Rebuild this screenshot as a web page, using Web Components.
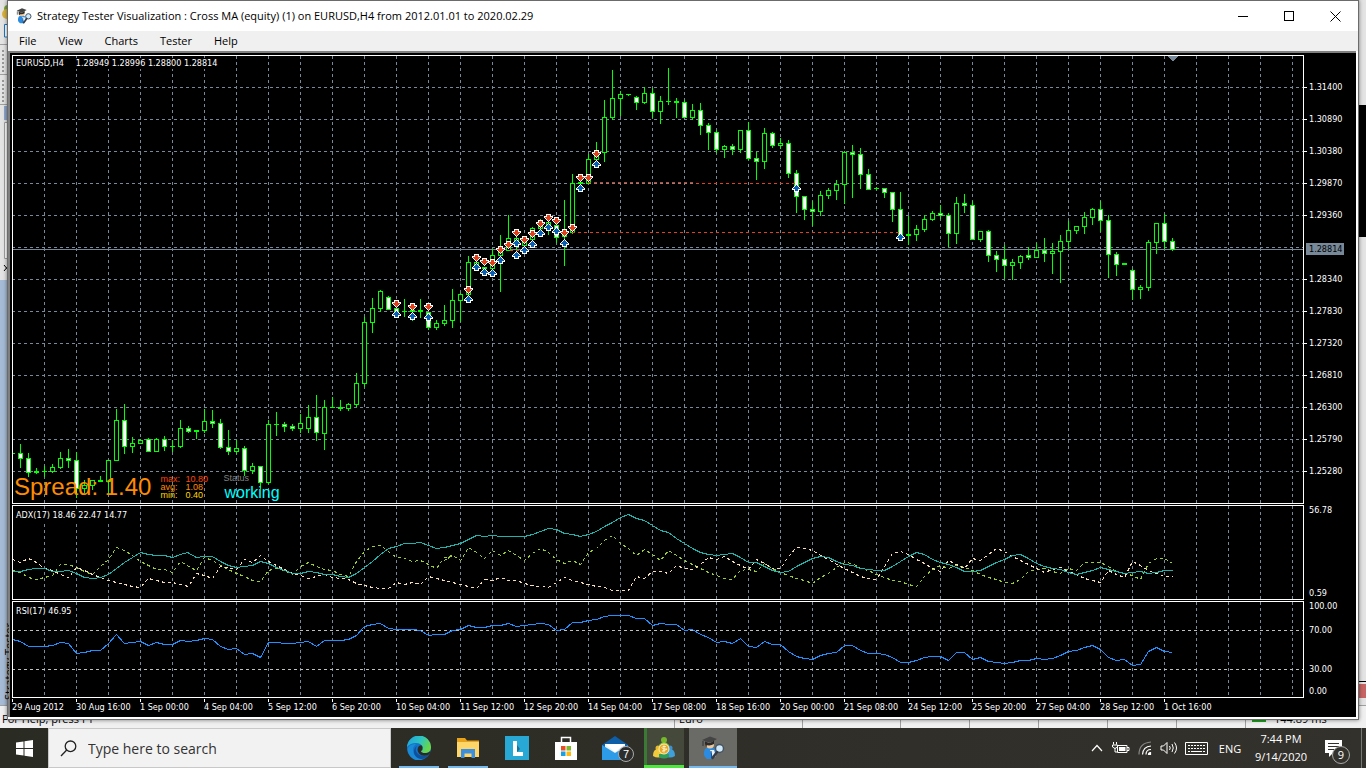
<!DOCTYPE html>
<html lang="en">
<head>
<meta charset="utf-8">
<title>Strategy Tester Visualization</title>
<style>
html,body{margin:0;height:100%;overflow:hidden;background:#000}
body{font-family:"Open Sans","Noto Sans",sans-serif;font-size:11px;color:#000}
</style>
</head>
<body>
<app-desktop></app-desktop>
<script>
function define(name, html, setup) {
  const tpl = document.createElement('template');
  tpl.innerHTML = html;
  customElements.define(name, class extends HTMLElement {
    connectedCallback() {
      if (this.shadowRoot) return;
      this.attachShadow({ mode: 'open' }).appendChild(tpl.content.cloneNode(true));
      if (setup) setup.call(this, this.shadowRoot);
    }
  });
}

/* ---------- market data: y values in chart space, one bar every 8px from x=12 ---------- */
/* high, body top, body bottom, low, kind (f = bearish filled, h = bullish hollow, d = flat) */
const BARS = `453 453 454 454 d|444 453 459 468 f|453 458 473 477 f|468 471 473 474 d|466 471 472 477 d|464 467 472 473 h|452 458 468 469 h|449 458 461 468 f|452 460 489 498 f|480 485 489 493 h|480 480 486 490 h|476 480 482 482 d|460 460 482 495 h|409 420 461 461 h|404 420 447 454 f|437 443 447 453 h|439 440 444 444 h|438 439 452 452 f|438 439 452 452 h|436 439 447 451 f|440 446 447 452 d|420 428 447 448 h|426 428 432 433 f|430 430 432 439 d|409 421 431 433 h|410 421 424 428 f|419 423 448 449 f|430 447 452 455 f|440 448 452 454 h|446 448 471 476 f|463 466 471 474 h|466 466 483 489 f|420 424 483 484 h|412 424 425 436 d|422 424 427 432 f|424 426 429 431 f|414 423 429 433 h|405 417 429 433 h|395 417 433 441 f|400 407 434 450 h|397 407 408 408 d|400 407 409 411 d|403 404 409 411 h|373 383 405 407 h|317 322 384 387 h|298 308 323 333 h|290 291 309 312 h|296 297 310 310 f|308 308 313 313 f|299 311 312 317 d|309 310 312 321 d|299 310 312 318 d|312 312 328 330 f|320 323 328 330 h|305 320 324 326 h|289 300 321 328 h|293 294 301 322 h|256 262 295 295 h|262 262 265 265 h|267 267 269 269 d|249 255 269 269 h|235 251 256 292 h|215 238 251 251 h|236 238 247 255 h|236 242 246 246 h|227 228 240 240 h|219 225 229 229 h|222 222 230 235 h|225 225 238 243 f|200 233 237 266 h|174 183 233 234 h|182 182 184 184 d|154 159 184 184 h|142 155 160 160 h|100 117 153 162 h|70 98 118 120 h|91 94 99 116 h|94 94 95 96 d|96 97 103 110 f|87 93 103 104 h|88 93 112 118 f|96 101 112 124 h|68 101 102 105 d|98 101 103 118 d|100 102 118 118 f|104 110 118 120 h|103 110 126 135 f|123 125 133 150 f|130 132 150 153 f|145 146 150 158 h|144 146 150 155 f|130 130 150 153 h|122 130 159 160 f|152 158 162 180 f|128 133 162 169 h|132 133 146 148 f|138 143 146 149 h|140 143 174 178 f|170 173 197 213 f|196 196 210 220 f|201 209 212 226 f|191 195 212 216 h|188 190 196 199 h|180 184 191 200 h|151 152 185 204 h|145 152 155 198 f|148 154 175 189 f|169 174 190 190 f|187 188 189 190 d|188 188 193 198 f|192 192 210 222 f|192 209 237 237 f|216 234 236 245 d|225 229 235 241 h|215 219 230 232 h|211 213 220 221 h|205 213 216 219 f|213 215 234 247 f|197 203 234 244 h|194 203 206 213 f|201 205 240 240 f|231 231 240 242 h|230 231 256 262 f|251 255 260 272 f|245 259 266 279 f|259 262 266 280 h|255 256 263 269 h|247 255 258 260 f|243 250 258 258 h|238 250 254 262 f|243 251 254 274 h|235 241 252 283 h|221 230 242 249 h|226 226 231 234 h|212 217 227 234 h|208 209 218 225 h|201 209 221 232 f|215 220 255 278 f|252 254 265 276 f|263 263 265 265 d|269 270 290 300 f|285 287 290 299 h|240 242 288 291 h|223 223 243 254 h|214 223 242 249 f|238 241 250 251 f`;
const SELLS = '396,304 412,307 428,307 468,290 476,258 484,262 492,263 500,250 508,245 516,233 524,240 532,234 540,224 548,218 556,221 564,233 572,228 580,178 588,178 596,154';
const BUYS = '396,314 412,316 428,317 468,299 476,267 484,272 492,273 500,260 516,243 516,255 524,250 532,244 540,233 548,227 556,231 564,243 580,188 596,164 796,188 900,237';

/* indicator series: x,y pairs in thirds of a pixel, in three sections that start at x=0, 440 and 880 */
const SERIES = {
 adx: [[0,'38,214 62,214 85,208 110,205 133,205 157,214 181,214 205,211 229,220 253,231 280,236 301,233 325,222 349,205 373,187 397,171 421,157 445,162 469,166 493,166 517,172 541,162 563,157 589,172 613,169 637,170 661,184 685,195 709,203 733,200 757,196 781,184 805,190 829,203 853,212 877,221 901,219 925,214 949,217 973,222 997,222 1021,229 1045,233 1069,221 1093,203 1117,184 1141,163 1165,144 1189,140 1213,131 1237,131 1261,127 1285,136 1309,146'],
  [440,'13,143 37,136 61,129 85,118 109,106 133,109 157,105 181,109 205,109 253,108 277,102 301,94 325,85 349,88 373,99 397,103 421,109 445,103 469,94 493,79 517,66 541,53 565,43 589,55 613,62 637,76 661,91 685,98 709,114 733,130 757,145 781,157 805,164 829,167 853,162 877,160 901,172 925,187 949,187 973,200 997,211 1021,217 1045,213 1069,198 1093,186 1117,174 1141,170 1165,172 1189,183 1213,193 1237,197 1261,204 1285,209 1309,212'],
  [880,'13,212 37,200 61,184 85,168 109,157 133,162 157,178 181,188 205,194 229,203 253,214 277,214 301,211 325,200 349,188 373,177 397,166 421,164 445,175 469,190 493,199 517,205 541,208 565,216 589,222 613,216 637,211 661,202 685,207 709,213 733,220 757,217 781,214 805,220 829,217 853,212 876,212']],
 plus: [[0,'38,210 61,218 85,231 109,237 133,232 157,227 181,192 205,192 229,203 253,213 277,224 301,200 325,178 349,142 373,152 397,167 421,183 445,196 469,207 493,208 517,217 541,185 565,200 589,210 613,172 637,182 661,197 685,207 709,219 733,230 757,240 781,243 805,212 829,204 853,212 877,222 901,200 925,187 949,198 973,208 997,211 1021,222 1045,228 1069,185 1093,155 1117,140 1141,136 1165,155 1189,172 1213,175 1237,184 1261,180 1285,194 1309,204 1333,173 1357,166'],
  [440,'13,180 37,165 61,180 85,143 109,158 133,175 157,150 181,167 205,150 229,165 253,180 277,161 301,146 325,158 349,177 373,189 397,181 421,192 445,158 469,144 493,122 517,106 541,130 565,146 589,166 613,148 637,162 661,182 685,152 709,165 733,180 757,194 781,205 805,216 829,227 853,236 877,239 901,211 925,209 949,214 973,191 997,205 1021,217 1045,226 1069,236 1093,240 1117,249 1141,233 1165,221 1189,202 1213,187 1237,191 1261,204 1285,212 1309,224'],
  [880,'13,231 37,240 61,245 85,253 109,260 133,230 157,207 181,195 205,206 229,197 253,203 277,212 301,222 325,232 349,239 373,248 397,251 421,238 445,213 469,207 493,204 517,214 541,220 565,204 589,212 613,187 637,187 661,187 685,200 709,214 733,220 757,226 781,238 805,190 829,175 853,176 876,190']],
 minus: [[0,'38,177 61,187 85,176 109,186 133,205 157,210 181,222 205,233 229,203 253,212 277,224 301,232 325,240 349,247 373,253 397,260 421,262 445,234 469,240 493,247 517,247 541,254 565,260 589,220 613,227 637,236 661,200 685,202 709,207 733,178 757,187 781,167 805,183 829,195 853,207 877,221 901,226 925,235 949,229 973,222 997,232 1021,234 1045,239 1069,249 1093,256 1117,261 1141,264 1165,265 1189,248 1213,253 1237,248 1261,253 1285,229 1309,236'],
  [440,'13,240 37,248 61,253 85,259 109,264 133,238 157,242 181,233 205,240 229,241 253,250 277,256 301,260 325,262 349,246 373,233 397,240 421,246 445,254 469,259 493,263 517,270 541,270 565,272 589,230 613,234 637,214 661,214 685,220 709,196 733,204 757,208 781,193 805,173 829,178 853,170 877,183 901,197 925,207 949,177 973,191 997,204 1021,206 1045,170 1069,143 1093,146 1117,150 1141,167 1165,178 1189,192 1213,205 1237,218 1261,228 1285,234 1309,237'],
  [880,'13,200 37,160 61,155 85,163 109,177 133,189 157,206 181,215 205,181 229,192 253,206 277,176 301,180 325,162 349,146 373,155 397,168 421,181 445,192 469,204 493,217 517,207 541,202 565,213 589,224 613,234 637,241 661,246 685,210 709,222 733,232 757,184 781,197 805,210 829,219 853,230 876,230']],
 rsi: [[0,'38,418 61,425 85,439 109,439 133,439 157,436 181,427 205,430 229,461 253,457 277,451 301,451 325,430 349,403 373,430 397,427 421,424 445,436 469,427 493,433 517,433 541,421 565,425 589,421 613,415 637,419 661,440 685,449 709,445 733,463 757,460 781,472 805,427 829,427 853,430 877,430 901,428 925,424 949,438 973,422 997,421 1021,421 1045,417 1069,406 1093,380 1117,373 1141,371 1165,385 1189,388 1237,388 1261,391 1285,406 1309,403'],
  [440,'13,403 37,391 61,388 85,376 109,382 133,382 157,377 181,376 205,370 229,379 253,376 277,373 301,370 325,373 349,391 373,387 397,367 421,367 445,361 469,358 493,349 517,346 565,346 589,355 613,356 637,376 661,370 685,373 709,373 733,391 757,388 781,403 805,413 829,427 853,424 877,430 901,415 925,438 949,443 973,424 997,433 1021,433 1045,454 1069,468 1093,475 1117,479 1141,467 1165,461 1189,457 1213,436 1237,437 1261,451 1285,460 1309,460'],
  [880,'13,463 37,472 61,487 85,487 109,481 133,472 157,469 181,469 205,481 229,457 253,458 277,478 301,472 325,484 349,487 373,490 397,487 421,481 445,481 469,475 493,478 517,475 541,466 565,454 589,451 613,442 637,436 661,449 685,472 709,482 733,478 757,496 781,493 805,455 829,442 853,454 876,457']]
};
const points = key => SERIES[key].map(([x0, s]) => s.split(' ').map(p => {
  const [x, y] = p.split(',').map(Number);
  return Math.round(x0 + x / 3 - .5) + ',' + Math.floor(500 + y / 3);
}).join(' ')).join(' ');
const line = (key, color, dash) => `<polyline points="${points(key)}" transform="translate(.5 .5)" fill="none" stroke="${color}" ${dash ? `stroke-dasharray="${dash}"` : ''} shape-rendering="crispEdges"/>`;

const gridLines = (top, height, rows) => {
  let s = '';
  for (let x = 44; x < 2600; x += 32) s += `<path d="M${x}.5 ${top}V${top + height}"/>`;
  for (const y of rows) s += `<path d="M12 ${y}.5H2600"/>`;
  return `<g fill="none" stroke="#778899" stroke-dasharray="3 3" shape-rendering="crispEdges">${s}</g>`;
};

const candles = () => BARS.split('|').map((row, i) => {
  const [h, t, b, l, k] = row.split(' ');
  const x = 12 + 8 * i;
  let s = '';
  if (k !== 'd') {
    s += `<path fill="#0f0" d="M${x} ${h}h1V${t}h-1zM${x} ${b}h1V${l}h-1z"/>`;
    s += `<rect x="${x - 2}" y="${t}" width="5" height="${b - t}" fill="#0f0"/>`;
    s += `<rect x="${x - 1}" y="${+t + 1}" width="3" height="${Math.max(1, b - t - 2)}" fill="${k === 'f' ? '#fff' : '#000'}"/>`;
  } else {
    s += `<path fill="#0f0" d="M${x} ${h}h1V${l}h-1zM${x - 2} ${t}h5V${b}h-5z"/>`;
  }
  return s;
}).join('');

const arrows = (list, id) => list.split(' ').map(p => {
  const [x, y] = p.split(',');
  return `<use href="#${id}" x="${x}" y="${y}"/>`;
}).join('');

/* ---------- shared icons ---------- */
const scholar = size => `<svg width="${size}" height="${size}" viewBox="0 0 24 24">
<path d="M4 13q5-4 10 0l1 5-3 5H6q-5-4-2-10z" fill="#2b8be0"/><path d="M9 14l3 8 3-2-2-6z" fill="#e8f2fb"/><path d="M10 15l1 7" stroke="#1b4a80"/>
<circle cx="9" cy="8.500" r="4" fill="#e9c9a0"/><path d="M5 7l-1 3 2 1V7z" fill="#6b4a22"/>
<path d="M1 4l8-3.500L16 3l-7 4z" fill="#444"/><path d="M4 5.500v3q5 2 9-.5V4.500L9 7z" fill="#2b2b2b"/><path d="M2 5v5" stroke="#333"/>
<circle cx="18.500" cy="12.500" r="4" fill="#cfe9fb" stroke="#44525f" stroke-width="1.500"/><path d="M16 16l-4.500 6" stroke="#333c46" stroke-width="2.500" stroke-linecap="round"/></svg>`;

define('app-titlebar', `<style>
:host{display:flex;align-items:center;height:30px;background:#fff;padding-left:8px}
h1{flex:1;margin:0;font-size:11px;font-weight:400;line-height:16px;padding-left:5px;white-space:nowrap}
svg{display:block}
button{border:0;background:none;width:46px;height:30px;padding:0;display:grid;place-items:center}
.controls{display:flex}
</style>
${scholar(16)}<h1><slot></slot></h1>
<div class="controls">
<button aria-label="Minimize"><svg width="11" height="11" shape-rendering="crispEdges"><path d="M0 5.500H10" stroke="#000"/></svg></button>
<button aria-label="Maximize"><svg width="11" height="11" shape-rendering="crispEdges"><path d="M.5.5H9.500V9.500H.5z" fill="none" stroke="#000"/></svg></button>
<button aria-label="Close"><svg width="11" height="11"><path d="M.5.5L10.500 10.500M10.500.5L.5 10.500" stroke="#000"/></svg></button>
</div>`);

define('app-menubar', `<style>
:host{display:flex;align-items:center;gap:22px;height:20px;background:#f0f0f0;padding-left:11px}
button{border:0;background:none;padding:0;font:inherit;line-height:16px;color:#000}
</style><button>File</button><button>View</button><button>Charts</button><button>Tester</button><button>Help</button>`);

define('price-panel', `<style>
:host{display:block;position:relative;border:1px solid #fff;overflow:hidden;min-height:0}
svg{position:absolute;inset:0;width:100%;height:100%}
.caption{position:absolute;left:2px;top:2px;background:#000;line-height:11px;padding:0 1px;display:flex;gap:12px}
.stats{position:absolute;left:1px;bottom:1px;display:flex;align-items:flex-end;font-family:"Liberation Sans",Arial,sans-serif}
.spread{font-size:24px;line-height:30px;color:#ff8c00}
dl{margin:0 0 3px 9px;display:grid;grid-template-columns:25px 23px;font-size:9px;line-height:8px}
dt,dd{margin:0}
.max{color:#ff4500}.avg{color:#ff8c00}.min{color:#ffd700}
.status{margin-left:15px;font-size:9px;line-height:12px;color:#808080}
.status strong{display:block;font-weight:400;font-size:16px;line-height:18px;color:#0ff;padding-left:1px}
</style><svg aria-hidden="true"></svg>
<div class="caption"><span>EURUSD,H4</span><span>1.28949 1.28996 1.28800 1.28814</span></div>
<div class="stats"><div class="spread">Spread: 1.40</div>
<dl><dt class="max">max:</dt><dd class="max">10.80</dd><dt class="avg">avg:</dt><dd class="avg">1.08</dd><dt class="min">min:</dt><dd class="min">0.40</dd></dl>
<div class="status">Status<strong>working</strong></div></div>`, function (root) {
  const rows = [];
  for (let y = 87; y < 1600; y += 32) rows.push(y);
  root.querySelector('svg').innerHTML = `<defs>
<g id="sell"><path fill="#fff" d="M-2-4h5v2h2v2h-1v1h-1v1h-1v1h-1v1h-1v-1h-1v-1h-1v-1h-1v-1h-1v-2h2z"/><path fill="#e0401c" d="M-1-3h3v2h2v1h-1v1h-1v1h-1v1h-1v-1h-1v-1h-1v-1h-1v-1h2z"/></g>
<g id="buy"><path fill="#fff" d="M-2 4h5v-2h2v-2h-1v-1h-1v-1h-1v-1h-1v-1h-1v1h-1v1h-1v1h-1v1h-1v2h2z"/><path fill="#0c60b4" d="M-1 3h3v-2h2v-1h-1v-1h-1v-1h-1v-1h-1v1h-1v1h-1v1h-1v1h2z"/></g></defs>
<g transform="translate(-13 -56)" shape-rendering="crispEdges">${gridLines(56, 2000, rows)}
<path d="M12 249.500H2600" stroke="#778899"/>${candles()}
<path d="M588 182.500H693M696 183.500H796M572 232.500H900M510 250.500H522" stroke="#e0401c" fill="none" stroke-dasharray="3 3"/>
${arrows(SELLS, 'sell')}${arrows(BUYS, 'buy')}
<path d="M1167 56h11l-5 5h-1z" fill="#778899"/></g>`;
});

define('adx-panel', `<style>
:host{display:block;position:relative;border:1px solid #fff;overflow:hidden}
svg{position:absolute;inset:0;width:100%;height:100%}
.caption{position:absolute;left:2px;top:4px;background:#000;line-height:11px;padding:0 1px}
</style><svg aria-hidden="true"></svg><div class="caption">ADX(17) 18.46 22.47 14.77</div>`, function (root) {
  root.querySelector('svg').innerHTML = `<g transform="translate(-13 -506)">${gridLines(506, 200, [])}
${line('plus', '#9acd32', '3 3')}${line('minus', '#f5deb3', '3 3')}${line('adx', '#20b2aa')}</g>`;
});

define('rsi-panel', `<style>
:host{display:block;position:relative;border:1px solid #fff;overflow:hidden}
svg{position:absolute;inset:0;width:100%;height:100%}
.caption{position:absolute;left:2px;top:4px;background:#000;line-height:11px;padding:0 1px}
</style><svg aria-hidden="true"></svg><div class="caption">RSI(17) 46.95</div>`, function (root) {
  root.querySelector('svg').innerHTML = `<g transform="translate(-13 -602)">${gridLines(602, 200, [])}
<path d="M12 630.500H2600M12 669.500H2600" stroke="#c0c0c0" stroke-dasharray="3 3" shape-rendering="crispEdges"/>
${line('rsi', '#1e90ff')}</g>`;
});

define('price-scale', `<style>
:host{display:block;position:relative;overflow:hidden;padding-top:16px}
ol{list-style:none;margin:0;padding:0}
li{height:32px;line-height:32px;display:flex;align-items:center}
li::before{content:"";width:3px;height:1px;background:#fff;margin-right:2px}
li:empty{visibility:hidden}
output{position:absolute;left:2px;top:188px;background:#778899;color:#000;line-height:12px;padding:0 2px 0 3px}
</style><ol></ol><output>1.28814</output>`, function (root) {
  root.querySelector('ol').innerHTML = ['1.31400','1.30890','1.30380','1.29870','1.29360','','1.28340','1.27830','1.27320','1.26810','1.26300','1.25790','1.25280'].map(t => `<li>${t}</li>`).join('');
});

define('level-scale', `<style>
:host{display:flex;flex-direction:column;line-height:11px}
::slotted(span){display:block;padding-left:5px}
</style><slot></slot>`);

define('time-scale', `<style>
:host{display:flex;overflow:hidden}
span{flex:0 0 64px;white-space:nowrap;line-height:11px}
span::before{content:"";display:block;width:1px;height:3px;background:#fff}
</style>`, function (root) {
  for (const t of ['29 Aug 2012','30 Aug 16:00','1 Sep 00:00','4 Sep 04:00','5 Sep 12:00','6 Sep 20:00','10 Sep 04:00','11 Sep 12:00','12 Sep 20:00','14 Sep 04:00','17 Sep 08:00','18 Sep 16:00','20 Sep 00:00','21 Sep 08:00','24 Sep 12:00','25 Sep 20:00','27 Sep 04:00','28 Sep 12:00','1 Oct 16:00']) {
    const s = document.createElement('span');
    s.textContent = t;
    root.appendChild(s);
  }
});

define('chart-view', `<style>
:host{display:grid;grid-template-columns:minmax(0,1fr) 52px;grid-template-rows:minmax(0,1fr) 95px 97px 18px;row-gap:1px;
background:#000;color:#fff;font:9px "DejaVu Sans Condensed","DejaVu Sans",sans-serif;padding:2px 0 0 2px;border:solid #808080;border-width:2px 0 0 2px;min-height:0}
.r70{margin-top:13px}.r30{margin-top:28px}.r0{margin-top:11px}
.a2{margin-top:72px}
time-scale{grid-column:1 / 3}
</style>
<price-panel></price-panel><price-scale></price-scale>
<adx-panel></adx-panel><level-scale><span>56.78</span><span class="a2">0.59</span></level-scale>
<rsi-panel></rsi-panel><level-scale><span>100.00</span><span class="r70">70.00</span><span class="r30">30.00</span><span class="r0">0.00</span></level-scale>
<time-scale></time-scale>`);

define('tester-window', `<style>
:host{display:grid;grid-template-rows:30px 20px minmax(0,1fr);background:#fff;border:solid #6b6b6b;border-width:1px;padding:0 2px 2px 0;box-shadow:0 0 4px rgba(0,0,0,.5)}
app-titlebar,app-menubar{margin-right:-2px}
</style>
<app-titlebar>Strategy Tester Visualization : Cross MA (equity) (1) on EURUSD,H4 from 2012.01.01 to 2020.02.29</app-titlebar>
<app-menubar></app-menubar><chart-view></chart-view>`);

define('terminal-window', `<style>
:host{display:grid;grid-template-rows:minmax(0,1fr) 23px;background:#e4e4e4}
.body{display:flex;justify-content:space-between;min-height:0}
.left,.right{width:9px;display:flex;flex-direction:column;overflow:hidden}
.left svg{display:block;flex:none}
.dock{flex:1;background:#a6bcd6;display:flex;flex-direction:column;justify-content:flex-end;padding:0 0 5px 2px}
.dock span{writing-mode:vertical-rl;transform:rotate(180deg);line-height:14px;width:14px;white-space:nowrap}
.right .log{height:132px;margin-top:105px;background:#000}
.right .mark{margin-top:auto;height:16px;width:11px;border-top:1px solid #000;background:linear-gradient(#e4e4e4 2px,#c86464 2px)}
.right .gap{height:7px}
.status{display:flex;border-top:1px solid #a0a0a0;background:#f0f0f0;line-height:14px;white-space:nowrap;overflow:hidden}
.status span{box-sizing:border-box;border-right:1px solid #a0a0a0;padding:6px 0 0 4px;width:69px}
.status .help{flex:1;padding-left:2px}.status .euro{width:128px}.status .mid{width:98px}.status .ping{width:120px;border:0;padding-left:6px;display:flex;gap:8px}
b{display:block;width:14px;height:10px;background:#20a020}
</style>
<div class="body"><div class="left"><svg width="9" height="280" viewBox="0 0 9 280"><circle cx="8" cy="9" r="4" fill="#76a83a"/><circle cx="7" cy="14" r="5" fill="#d8b23c"/><path d="M4.500 24.500H9V37H4.500z" fill="#fff" stroke="#1c78c8"/><path d="M0 44.500h9M0 74.500h9M0 104.500h9" stroke="#a0a0a0"/><path d="M3 50v22M3 80v22" stroke="#999" stroke-dasharray="2 2" stroke-width="2"/><path d="M4 106h5v14H4z" fill="#8ea6cc"/><path d="M4.500 122.500H9v136H4.500z" fill="#fff" stroke="#a0a0a0"/><path d="M7.500 234v18" stroke="#000"/><path d="M4 265l5 6M9 265l-5 6" stroke="#000"/></svg><div class="dock"><span>Strategy Tester</span></div></div>
<div class="right"><div class="log"></div><div class="mark"></div><div class="gap"></div></div></div>
<div class="status"><span class="help">For Help, press F1</span><span class="euro">Euro</span><span class="mid"></span><span></span><span></span><span></span><span></span><span></span><span class="ping"><b></b>144.89 ms</span></div>`);

define('task-tray', `<style>
:host{display:flex;align-items:center;height:40px;color:#fff;font-size:11px}
button{border:0;background:none;color:inherit;font:inherit;padding:0;height:40px;display:grid;place-items:center;position:relative}
.n{width:24px}.k{width:30px}.e{width:38px}.c{width:64px;line-height:18px;text-align:center;display:block}.m{width:40px;margin-right:8px}
small{position:absolute;left:19px;top:18px;width:16px;height:16px;border:1px solid #aaa;border-radius:50%;background:#33322d;font-size:11px;line-height:16px;text-align:center}
i{width:1px;height:40px;background:#777;margin-right:4px}
</style>
<button class="n" aria-label="Show hidden icons"><svg width="12" height="8"><path d="M1 7l5-5.500L11 7" fill="none" stroke="#fff" stroke-width="1.200"/></svg></button>
<button class="n" aria-label="Battery"><svg width="18" height="12" viewBox="0 0 18 12"><path d="M5.500 3.500h9.500v7H5.500zM15 5.500h2v3h-2" fill="none" stroke="#fff"/><path d="M7 5h6.500v4H7z" fill="#fff"/><path d="M1.500 0v2.500M4.500 0v2.500M.5 3h5v2L3 6.500.5 5zM3 6v4h2" fill="#33322d" stroke="#fff"/></svg></button>
<button class="n" aria-label="Network"><svg width="14" height="14" viewBox="0 0 14 14" fill="none" stroke="#fff" stroke-width="1.200"><path d="M1 13.500Q1 2 13 1" stroke="#888"/><path d="M4.500 13.500Q5 5.500 13 5M8 13.500q0-5 5-5"/><path d="M10.500 13.500q0-2 2-2v2z" fill="#fff"/></svg></button>
<button class="n" aria-label="Volume"><svg width="18" height="14" viewBox="0 0 18 14" fill="none" stroke="#fff"><path d="M1 5h2.500L7 1.500v11L3.500 9H1z"/><path d="M9.500 5q1.500 2 0 4M12 3q2.500 4 0 8M14.500 1.500q4 5.500 0 11"/></svg></button>
<button class="k" aria-label="Touch keyboard"><svg width="23" height="13" viewBox="0 0 23 13" fill="none" stroke="#fff"><path d="M.5.5h22v12H.5z"/><path d="M3 3.500h17M3 6.500h17" stroke-dasharray="2 1"/><path d="M3 9.500h2M6 9.500h11M18 9.500h2"/></svg></button>
<button class="e">ENG</button>
<button class="c">7:44 PM<br>9/14/2020</button>
<button class="m" aria-label="Notifications"><svg width="17" height="17" viewBox="0 0 17 17"><path d="M0 0h17v13H8l-4 4v-4H0z" fill="#fff"/><path d="M3 3.500h11M3 6.500h11M3 9.500h7" stroke="#33322d"/></svg><small>9</small></button><i></i>`);

define('task-bar', `<style>
:host{display:flex;height:40px;background:linear-gradient(90deg,#2a2b23,#33312c)}
button{border:0;background:none;padding:0;width:49px;height:40px;display:grid;place-items:center;position:relative}
button.start{width:48px}
label{display:flex;align-items:center;width:343px;box-sizing:border-box;border:1px solid #c8c8c8;background:#f2f2f2;padding-left:11px;color:#333}
input{border:0;background:none;outline:0;flex:1;min-width:0;font:14px "Open Sans","Noto Sans",sans-serif;padding:0 0 0 11px;color:#333}
input::placeholder{color:#333;opacity:1}
nav{display:flex;flex:1;padding-left:3px}
.run::after,.green::after,.active::after{content:"";position:absolute;left:5px;right:4px;bottom:0;height:2px;background:#76b9ed}
.green::before{content:"";position:absolute;inset:0 4px 0 5px;background:linear-gradient(90deg,#3b7a35 3px,#44493c 3px);z-index:0}
.green::after{background:#4ce63c;height:3px}
.active{background:linear-gradient(#6a6a66,#6a6a66) 1px 0 / 48px 100% no-repeat}
.active::after{left:1px;right:0}
svg{position:relative}
small{position:absolute;left:28px;top:18px;width:14px;height:14px;border:1px solid #aaa;border-radius:50%;background:#2d2d2d;color:#fff;font-size:11px;line-height:14px;text-align:center}
</style>
<button class="start" aria-label="Start"><svg width="17" height="17" viewBox="0 0 17 17" fill="#fff"><path d="M0 2.500L7.500 1.500V8H0zM8.500 1.300L17 0V8H8.500zM0 9h7.500v6.500L0 14.500zM8.500 9H17v8L8.500 15.700z"/></svg></button>
<label><svg width="17" height="17" viewBox="0 0 17 17" fill="none" stroke="#222" stroke-width="1.300"><circle cx="10.500" cy="6.300" r="5.300"/><path d="M6.700 10L1 16"/></svg><input type="text" placeholder="Type here to search" aria-label="Type here to search"></label>
<nav>
<button class="run" aria-label="Edge"><svg width="24" height="24" viewBox="0 0 24 24"><defs><linearGradient id="e1" x1="0" y1="0" x2="1" y2=".4"><stop offset="0" stop-color="#1f9fe0"/><stop offset=".6" stop-color="#2fc5c0"/><stop offset="1" stop-color="#66d64c"/></linearGradient></defs><circle cx="12" cy="12" r="12" fill="#1274c8"/><path d="M0 11A12 12 0 0 1 24 12q-.5 5-6 5-4 0-4-2 2-1 1.500-4Q14 7 9 7 3 7 0 11z" fill="url(#e1)"/><path d="M9 8q-5 4-2 10 3 5 9 5.300Q5 27 1 16 0 12 3 9.500 6 7.500 9 8z" fill="#1b8ad6"/><path d="M10 10q-3 4 1 8 5 4 11 0-3 5-8 5-6-1-7-6-.5-5 3-7z" fill="#0f509c"/><path d="M15.500 11q.5 3-1.500 4 0 2 4 2 4 0 5-2 1 2-2 4-6 2-9-1.500-3-4 0-7.500 3-2 3.500 1z" fill="#2b2b26"/></svg></button>
<button class="run" aria-label="File Explorer"><svg width="22" height="20" viewBox="0 0 22 20"><path d="M0 0h8l2 2.500H22V19H0z" fill="#e8a21c"/><path d="M0 4h22v15H0z" fill="#ffd667"/><path d="M4 11h14v9h-3.500v-4.500h-7V20H4z" fill="#3c8ede"/></svg></button>
<button aria-label="Lens"><svg width="24" height="24" viewBox="0 0 24 24"><path d="M0 0h24v24H0z" fill="#28a8d4"/><path d="M8 5h4v11h6v4H8z" fill="#fff"/><path d="M12 9v7l3-3z" fill="#176f96"/></svg></button>
<button aria-label="Microsoft Store"><svg width="24" height="24" viewBox="0 0 24 24"><path d="M7.500 7V1.500h9V7" fill="none" stroke="#fff" stroke-width="1.500"/><path d="M1 6h22v18H1z" fill="#fff"/><path d="M7 10h4.500v4.500H7z" fill="#e84c22"/><path d="M12.500 10H17v4.500h-4.500z" fill="#7db82b"/><path d="M7 15.500h4.500V20H7z" fill="#1ba0e2"/><path d="M12.500 15.500H17V20h-4.500z" fill="#fdb813"/></svg></button>
<button aria-label="Mail"><svg width="26" height="24" viewBox="0 0 26 24"><path d="M0 9L13 0l13 9v15H0z" fill="#0f5ea8"/><path d="M3 8h20v9H3z" fill="#e9f3fb"/><path d="M0 9l13 8 13-8v15H0z" fill="#2d9be8"/><path d="M3 8h20L13 16z" fill="#fff"/></svg><small>7</small></button>
<button class="green" aria-label="MetaTrader"><svg width="22" height="24" viewBox="0 0 22 24"><circle cx="11" cy="4" r="3" fill="#76b82a"/><path d="M6 9q5-6 10 0v4H6z" fill="#8cc63f"/><circle cx="5" cy="12" r="2.500" fill="#e7b92c"/><path d="M0 20q0-7 5-7t5 7q-5 3-10 0z" fill="#f0c93c"/><circle cx="17" cy="12" r="2.500" fill="#3f8fd2"/><path d="M12 20q0-7 5-7t5 7q-5 3-10 0z" fill="#3f9fd8"/><path d="M6 21q5 3 10 0v-3H6z" fill="#2f9e58"/><circle cx="11" cy="13" r="5" fill="#e8a82c" stroke="#fff3b0"/><path d="M13 10.700q-4-1-4 .8t3.800 1.500-3.800 2.200M11 9.500v7" fill="none" stroke="#fff6c8"/></svg></button>
<button class="active" aria-label="Strategy Tester">${scholar(24)}</button>
</nav><task-tray></task-tray>`);

define('app-desktop', `<style>
:host{display:grid;grid-template-rows:minmax(0,1fr) 40px;height:100vh}
.stage{display:grid;min-height:0;overflow:hidden}
terminal-window,tester-window{grid-area:1 / 1;min-height:0;min-width:0}
tester-window{margin:0 7px 8px 7px}
</style><div class="stage"><terminal-window></terminal-window><tester-window></tester-window></div><task-bar></task-bar>`);
</script>
</body>
</html>
